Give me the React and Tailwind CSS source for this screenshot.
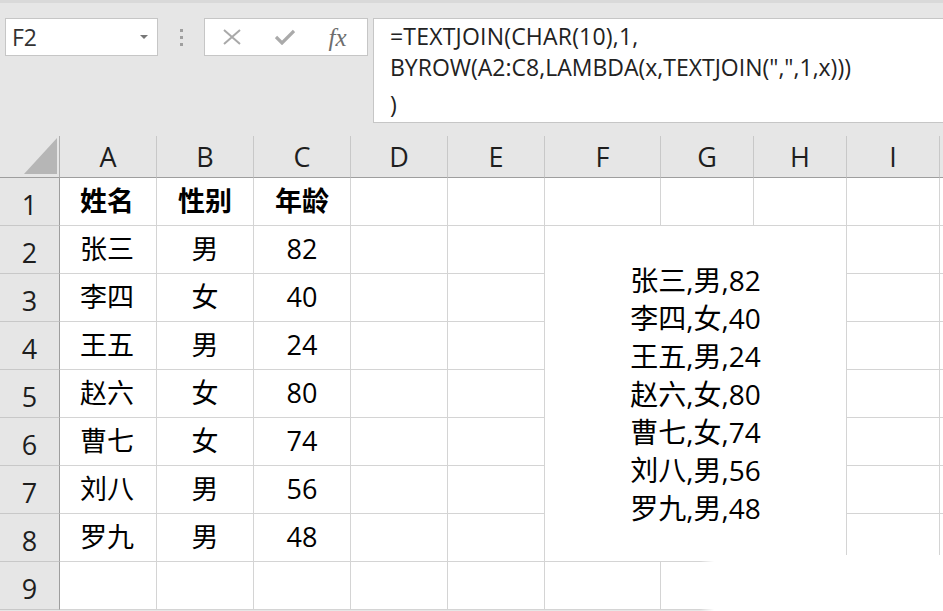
import React from "react";

const FONT = { fontFamily: '"Open Sans", "Noto Sans CJK SC", sans-serif' };

const cols = ["A", "B", "C", "D", "E", "F", "G", "H", "I", ""];
const data = [
  ["姓名", "性别", "年龄"],
  ["张三", "男", "82"],
  ["李四", "女", "40"],
  ["王五", "男", "24"],
  ["赵六", "女", "80"],
  ["曹七", "女", "74"],
  ["刘八", "男", "56"],
  ["罗九", "男", "48"],
  ["", "", ""],
];
const joined = data.slice(1, 8).map((r) => r.join(","));

function Toolbar() {
  return (
    <div className="flex items-start pt-[15px] h-[119px]">
      <div className="ml-[5px] w-[153px] h-[38px] bg-white border border-[#c6c6c6] flex items-center justify-between pl-[6px] pr-[9px]">
        <span className="text-[23px] text-[#333] leading-none">F2</span>
        <svg width="8" height="4" viewBox="0 0 8 4">
          <path d="M0 0 L8 0 L4 4 Z" fill="#777" />
        </svg>
      </div>
      <div className="w-[46px] h-[38px] flex flex-col items-center justify-center gap-[4px]">
        <div className="w-[3px] h-[3px] bg-[#9f9f9f]" />
        <div className="w-[3px] h-[3px] bg-[#9f9f9f]" />
        <div className="w-[3px] h-[3px] bg-[#9f9f9f]" />
      </div>
      <div className="w-[164px] h-[38px] bg-white border border-[#c6c6c6] flex items-center">
        <div className="w-[52px] flex justify-center pl-[2px]">
          <svg width="18" height="16" viewBox="0 0 18 16">
            <path d="M1 1 L17 15 M17 1 L1 15" stroke="#a9a9a9" strokeWidth="2" fill="none" />
          </svg>
        </div>
        <div className="w-[55px] flex justify-center">
          <svg width="20" height="16" viewBox="0 0 20 16">
            <path d="M1 8 L7 14 L19 2" stroke="#aaaaaa" strokeWidth="3.2" fill="none" />
          </svg>
        </div>
        <div className="flex-1 flex justify-center pr-[4px]">
          <span
            className="italic text-[25px] leading-none text-[#6e6e6e]"
            style={{ fontFamily: '"Liberation Serif", "DejaVu Serif", serif' }}
          >
            fx
          </span>
        </div>
      </div>
      <div className="ml-[5px] flex-1 h-[105px] bg-white border border-[#c6c6c6] border-r-0 pl-[16px] pt-[2px] text-[23px] text-[#222]">
        <div className="leading-[31px] tracking-[0.2px]">=TEXTJOIN(CHAR(10),1,</div>
        <div className="leading-[31px]">BYROW(A2:C8,LAMBDA(x,TEXTJOIN(",",1,x)))</div>
        <div className="leading-[31px] mt-[6px]">)</div>
      </div>
    </div>
  );
}

function Grid() {
  const cells = [];
  cells.push(
    <div key="corner" className="relative bg-[#e6e6e6] border-r border-b border-r-[#b0b0b0] border-b-[#9e9e9e]">
      <svg className="absolute left-[24px] top-[2px]" width="33" height="36" viewBox="0 0 33 36">
        <path d="M0 36 L33 36 L33 0 Z" fill="#b6b6b6" />
      </svg>
    </div>
  );
  cols.forEach((c, i) => {
    cells.push(
      <div
        key={"h" + i}
        className="bg-[#e6e6e6] border-r border-b border-r-[#c8c8c8] border-b-[#9e9e9e] flex items-center justify-center pt-[2px] text-[27px] text-[#1e1e1e]"
      >
        {c}
      </div>
    );
  });
  data.forEach((row, r) => {
    cells.push(
      <div
        key={"r" + r}
        className="bg-[#e6e6e6] border-r border-b border-r-[#9e9e9e] border-b-[#c8c8c8] flex items-center justify-center pt-[8px] text-[27px] text-[#1e1e1e]"
      >
        {r + 1}
      </div>
    );
    for (let c = 0; c < 10; c++) {
      if (r === 1 && c === 5) {
        cells.push(
          <div
            key="merged"
            className="col-span-3 row-span-7 bg-white border-r border-b border-[#d4d4d4] flex flex-col items-center justify-center text-[28px] leading-[38px] text-black"
          >
            {joined.map((t, k) => (
              <div key={k}>{t}</div>
            ))}
          </div>
        );
        c = 7;
        continue;
      }
      if (r >= 2 && r <= 7 && c >= 5 && c <= 7) continue;
      const text = c < 3 ? row[c] : "";
      const align = c === 0 ? "justify-start pl-[20px]" : "justify-center";
      cells.push(
        <div
          key={r + "-" + c}
          className={
            "bg-white border-r border-b border-[#d4d4d4] flex items-center text-[27px] text-black " +
            align +
            (r === 0 ? " font-bold" : "")
          }
        >
          {text}
        </div>
      );
    }
  });
  return (
    <div className="grid grid-cols-[60px_97px_97px_97px_97px_97px_116px_93px_93px_93px_100px] grid-rows-[42px_repeat(9,48px)]">
      {cells}
    </div>
  );
}

export default function App() {
  return (
    <div className="relative w-[943px] h-[611px] overflow-hidden bg-[#e6e6e6]" style={FONT}>
      <div className="h-[3px] bg-[#d9d9d9]" />
      <Toolbar />
      <div className="mt-[14px]">
        <Grid />
      </div>
      <div className="absolute left-[700px] top-[555px] w-[243px] h-[56px] bg-[linear-gradient(to_right,rgba(255,255,255,0),#ffffff_14px)]" />
    </div>
  );
}
